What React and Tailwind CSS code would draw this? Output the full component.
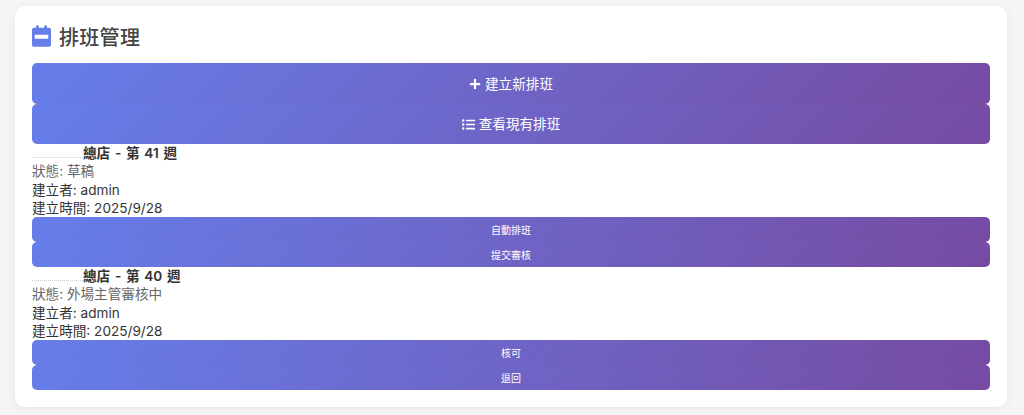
import React from 'react';
import { FaPlus, FaListUl } from 'react-icons/fa';

// Solid calendar, same shape as the one in the title
const CalendarIcon = () => (
  <svg viewBox="0 0 448 512" className="w-[19px] h-[22px] fill-[#667eea] mt-[1px]">
    <path
      fillRule="evenodd"
      d="M96 32v32H48C21.500 64 0 85.500 0 112v352c0 26.500 21.500 48 48 48h352c26.500 0 48-21.500 48-48V112c0-26.500-21.500-48-48-48h-48V32c0-17.700-14.300-32-32-32s-32 14.300-32 32v32H160V32c0-17.700-14.300-32-32-32S96 14.300 96 32zM64 224h320v96H64v-96z"
    />
  </svg>
);

const GradientButton = ({ small, children }) => (
  <button
    className={
      small
        ? 'w-full h-[25px] pt-px rounded-[5px] bg-linear-[135deg,#667eea_0%,#764ba2_100%] text-white text-[10px] flex items-center justify-center'
        : 'w-full h-[40.500px] pt-px rounded-[5px] bg-linear-[135deg,#667eea_0%,#764ba2_100%] text-white text-[13.600px] flex items-center justify-center gap-[4px]'
    }
  >
    {children}
  </button>
);

const schedules = [
  { week: '第 41 週', status: '草稿', actions: ['自動排班', '提交審核'] },
  { week: '第 40 週', status: '外場主管審核中', actions: ['核可', '退回'] },
];

export default function App() {
  return (
    <div className="h-[415px] bg-[#f5f5f5] pt-[6px] pl-[15px] pr-[17px] font-['Inter','Noto_Sans_CJK_TC',sans-serif] text-[#333]">
      <div className="h-[401px] bg-white rounded-[10px] shadow-[0_2px_10px_rgba(0,0,0,0.06)] px-[17px] pt-[18px]">
        <h2 className="h-[39px] flex items-start gap-[8px] text-[20px] leading-[28px] font-medium tracking-[0.3px] text-[#444]">
          <CalendarIcon />
          <span>排班管理</span>
        </h2>

        <GradientButton>
          <FaPlus size={12} />
          建立新排班
        </GradientButton>
        <GradientButton>
          <FaListUl size={13} />
          查看現有排班
        </GradientButton>

        {schedules.map((s) => (
          <div key={s.week}>
            <div className="text-[13.600px] leading-[18.250px]">
              <p className="font-semibold flex">
                {/* masked store name, only a faint trace is left */}
                <span className="w-[51px] h-[14px] shrink-0 border-b border-dotted border-[#ccc]" />
                <span className="[word-spacing:1.300px]">總店 - {s.week}</span>
              </p>
              <p className="text-[#666]">狀態: {s.status}</p>
              <p>建立者: admin</p>
              <p>建立時間: 2025/9/28</p>
            </div>
            {s.actions.map((a) => (
              <GradientButton small key={a}>{a}</GradientButton>
            ))}
          </div>
        ))}
      </div>
    </div>
  );
}
